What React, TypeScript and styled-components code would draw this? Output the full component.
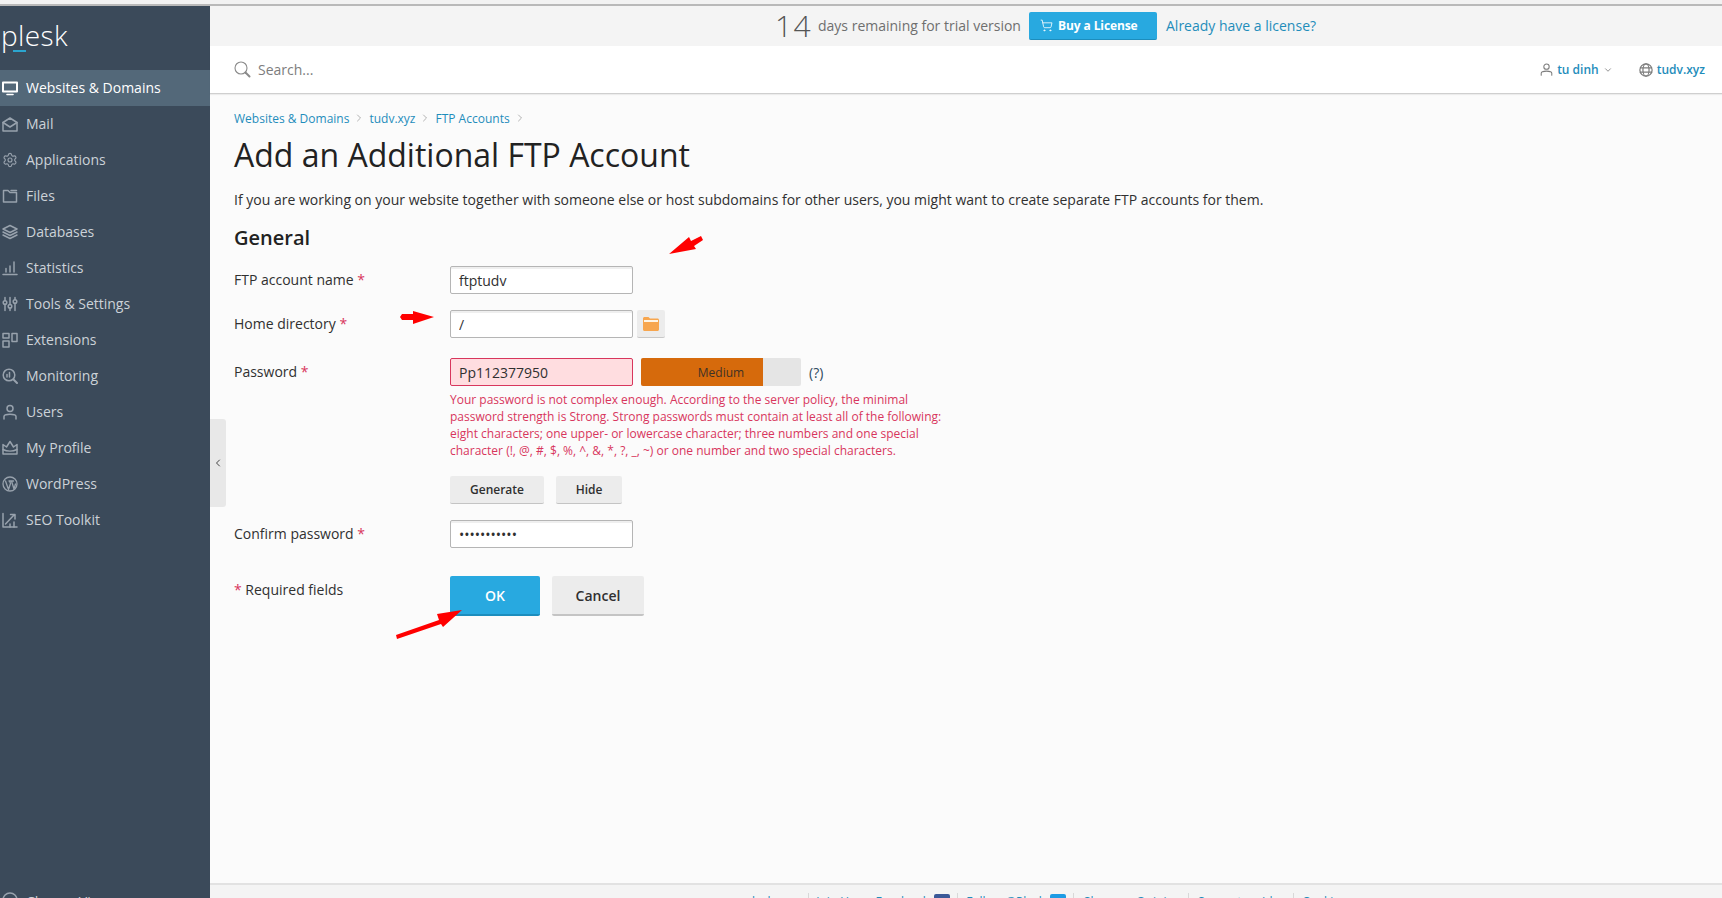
import React from 'react';
import styled, { createGlobalStyle } from 'styled-components';
import { ChevronDown, ChevronLeft, ChevronRight, Settings, ShoppingCart } from 'lucide-react';

const GlobalStyle = createGlobalStyle`
  html, body {
    margin: 0;
    padding: 0;
    height: 100%;
    overflow: hidden;
  }
  body {
    font-family: 'Open Sans', 'Liberation Sans', sans-serif;
    font-size: 14px;
    color: #303030;
  }
  * {
    box-sizing: border-box;
  }
`;

const Page = styled.div`
  position: relative;
  height: 100vh;
  overflow: hidden;
  background: #f2f2f2;
  padding-top: 4px;
`;

const TopLine = styled.div`
  height: 2px;
  background: #b9b9b9;
`;

const Shell = styled.div`
  display: flex;
  height: 892px;
`;

const Sidebar = styled.aside`
  flex: 0 0 210px;
  background: #3b4a5a;
  overflow: hidden;
`;

const Logo = styled.div`
  position: relative;
  height: 64px;
  padding: 11px 0 0 1px;
  font-size: 28px;
  font-weight: 300;
  line-height: 36px;
  letter-spacing: 0.4px;
  color: #ffffff;
`;

const LogoMark = styled.span`
  position: absolute;
  left: 13px;
  top: 44px;
  width: 13px;
  height: 2px;
  background: #2ba5cf;
`;

const NavItem = styled.div<{ $active?: boolean }>`
  display: flex;
  align-items: center;
  height: 36px;
  padding: 0 0 1px 2px;
  gap: 8px;
  font-size: 14px;
  font-weight: 500;
  background: ${(p) => (p.$active ? '#536879' : 'transparent')};
  color: ${(p) => (p.$active ? '#ffffff' : '#ccd2d8')};

  svg {
    flex: 0 0 16px;
    color: ${(p) => (p.$active ? '#ffffff' : '#98a2ad')};
  }
`;

const BottomItem = styled(NavItem)`
  margin-top: 354px;
  height: 26px;
  align-items: flex-start;
  padding-bottom: 0;
`;

const Main = styled.main`
  flex: 1;
  min-width: 0;
  display: flex;
  flex-direction: column;
  background: #fbfbfb;
`;

const TrialBar = styled.div`
  flex: 0 0 40px;
  display: flex;
  align-items: center;
  padding: 0 0 1px 565px;
  background: #f4f4f4;
  color: #6f6f6f;
`;

const TrialDays = styled.span`
  font-size: 30px;
  font-weight: 300;
  letter-spacing: 1.5px;
  line-height: 38px;
  width: 43px;
  color: #555555;
`;

const TrialText = styled.span`
  font-size: 14px;
  width: 211px;
`;

const BuyButton = styled.span`
  display: flex;
  align-items: center;
  gap: 5px;
  width: 128px;
  height: 28px;
  padding-left: 11px;
  border-radius: 2px;
  border-bottom: 1px solid #1c8dbd;
  background: #28a9e0;
  color: #ffffff;
  font-size: 12px;
  font-weight: 700;
  letter-spacing: -0.1px;
`;

const TextLink = styled.a<{ $size?: number; $weight?: number }>`
  color: #1f8dbb;
  font-size: ${(p) => p.$size ?? 14}px;
  font-weight: ${(p) => p.$weight ?? 400};
  text-decoration: none;
`;

const AlreadyLink = styled(TextLink)`
  margin-left: 9px;
`;

const SearchBar = styled.div`
  flex: 0 0 48px;
  display: flex;
  align-items: center;
  justify-content: space-between;
  padding: 0 17px 0 24px;
  background: #ffffff;
  border-bottom: 1px solid #cfcfcf;
  box-shadow: 0 1px 1px rgba(0, 0, 0, 0.06);
`;

const SearchBox = styled.div`
  display: flex;
  align-items: center;
  gap: 7px;
  color: #7d7d7d;
  font-size: 14px;
`;

const UserMenu = styled.div`
  display: flex;
  align-items: center;
  color: #7d7d7d;
`;

const UserEntry = styled.div<{ $gap: number }>`
  display: flex;
  align-items: center;
  gap: 4px;
  margin-right: ${(p) => p.$gap}px;
`;

const Content = styled.section`
  flex: 1;
  padding: 15px 24px 0;
`;

const Breadcrumbs = styled.nav`
  display: flex;
  align-items: center;
  height: 18px;
  gap: 4px;
  color: #8a8a8a;
`;

const Title = styled.h1`
  margin: 8px 0 0;
  font-size: 32px;
  font-weight: 400;
  line-height: 40px;
  color: #222222;
`;

const Intro = styled.p`
  margin: 15px 0 0;
  line-height: 20px;
  font-size: 14px;
  color: #303030;
`;

const SectionTitle = styled.h2`
  margin: 14px 0 0;
  font-size: 20px;
  font-weight: 600;
  line-height: 28px;
  color: #222222;
`;

const Row = styled.div<{ $top: number }>`
  display: grid;
  grid-template-columns: 216px 1fr;
  margin-top: ${(p) => p.$top}px;
`;

const Label = styled.label<{ $offset?: number }>`
  display: block;
  font-size: 14px;
  line-height: 20px;
  padding-top: ${(p) => p.$offset ?? 4}px;
  color: #303030;
`;

const Star = styled.span`
  color: #d8365d;
`;

const Field = styled.div`
  display: flex;
  align-items: center;
`;

const TextInput = styled.input<{ $error?: boolean }>`
  width: 183px;
  height: 28px;
  padding: 0 8px;
  border-radius: 2px;
  border: 1px solid ${(p) => (p.$error ? '#d8365d' : '#b5b5b5')};
  box-shadow: ${(p) => (p.$error ? 'none' : 'inset 0 2px 0 #efefef')};
  background: ${(p) => (p.$error ? '#ffdde0' : '#ffffff')};
  color: #303030;
  font: 14px 'Open Sans', 'Liberation Sans', sans-serif;
  outline: none;
`;

const BrowseButton = styled.span`
  display: flex;
  align-items: center;
  justify-content: center;
  width: 28px;
  height: 28px;
  margin-left: 4px;
  background: #ececec;
  border-bottom: 1px solid #c8c8c8;
  border-radius: 2px;
`;

const Strength = styled.div`
  position: relative;
  width: 160px;
  height: 28px;
  margin-left: 8px;
  background: #e5e5e5;
  border-radius: 2px;
  overflow: hidden;
`;

const StrengthFill = styled.div<{ $percent: number }>`
  width: ${(p) => p.$percent}%;
  height: 100%;
  background: #d66a0c;
`;

const StrengthLabel = styled.span`
  position: absolute;
  inset: 0;
  display: flex;
  align-items: center;
  justify-content: center;
  font-size: 12px;
  color: #3f3226;
`;

const Hint = styled.span`
  margin-left: 8px;
  color: #2f4a5f;
  font-size: 14px;
`;

const ErrorText = styled.div`
  width: 505px;
  margin-top: 5px;
  font-size: 12px;
  line-height: 17px;
  color: #d8365d;
`;

const ButtonRow = styled.div<{ $top: number; $gap: number }>`
  display: flex;
  gap: ${(p) => p.$gap}px;
  margin-top: ${(p) => p.$top}px;
`;

const SmallButton = styled.span<{ $width: number }>`
  display: flex;
  align-items: center;
  justify-content: center;
  width: ${(p) => p.$width}px;
  height: 28px;
  background: #ececec;
  border-bottom: 1px solid #c4c4c4;
  border-radius: 2px;
  font-size: 12px;
  font-weight: 600;
  color: #303030;
`;

const BigButton = styled.span<{ $primary?: boolean; $width: number }>`
  display: flex;
  align-items: center;
  justify-content: center;
  width: ${(p) => p.$width}px;
  height: 40px;
  border-radius: 2px;
  background: ${(p) => (p.$primary ? '#28a9e0' : '#ececec')};
  border-bottom: 2px solid ${(p) => (p.$primary ? '#1c8dbd' : '#c4c4c4')};
  color: ${(p) => (p.$primary ? '#ffffff' : '#303030')};
  font-size: 14px;
  font-weight: 600;
`;

const Footer = styled.footer`
  flex: 0 0 15px;
  display: flex;
  align-items: flex-start;
  padding: 8px 0 0 538px;
  overflow: hidden;
  background: #f4f4f4;
  border-top: 2px solid #e2e2e2;
`;

const FooterItem = styled.div<{ $width: number }>`
  display: flex;
  align-items: flex-start;
  justify-content: flex-end;
  gap: 5px;
  width: ${(p) => p.$width}px;
  height: 20px;
  padding-right: 7px;
  border-right: 1px solid #d8d8d8;
  white-space: nowrap;
`;

const FooterLast = styled(TextLink)`
  margin-left: 8px;
`;

const SocialBadge = styled.span<{ $color: string }>`
  display: block;
  width: 16px;
  height: 16px;
  margin-top: 1px;
  border-radius: 2px;
  background: ${(p) => p.$color};
`;

const Arrow = styled.svg`
  position: absolute;
  left: 0;
  top: 0;
  pointer-events: none;
`;

const CollapseTab = styled.div`
  position: absolute;
  left: 210px;
  top: 419px;
  width: 16px;
  height: 88px;
  display: flex;
  align-items: center;
  justify-content: center;
  background: #e8e8e8;
  border-radius: 0 3px 3px 0;
  color: #444444;
`;

const Ico = ({ children, size = 16, weight = 1.5 }: { children: React.ReactNode; size?: number; weight?: number }) => (
  <svg
    width={size}
    height={size}
    viewBox="0 0 16 16"
    fill="none"
    stroke="currentColor"
    strokeWidth={weight}
    strokeLinecap="round"
    strokeLinejoin="round"
  >
    {children}
  </svg>
);

const navItems: { label: string; icon: React.ReactNode; active?: boolean }[] = [
  {
    label: 'Websites & Domains',
    active: true,
    icon: (
      <Ico>
        <rect x="1" y="2.5" width="14" height="9" strokeWidth="2" />
        <path d="M5 14.5h6" strokeWidth="1.6" />
      </Ico>
    ),
  },
  {
    label: 'Mail',
    icon: (
      <Ico>
        <path d="M1 6.5 8 2l7 4.5V15H1z" />
        <path d="M1 6.5 8 11l7-4.500" />
      </Ico>
    ),
  },
  {
    label: 'Applications',
    icon: <Settings size={16} strokeWidth={1.7} />,
  },
  {
    label: 'Files',
    icon: (
      <Ico>
        <path d="M1.500 2.500h4.500l2 2h6.500V14h-13z" />
        <path d="M9 2.500h5.500" />
      </Ico>
    ),
  },
  {
    label: 'Databases',
    icon: (
      <Ico>
        <path d="M8 1.500 15 5 8 8.500 1 5z" />
        <path d="M1 8l7 3.500L15 8" />
        <path d="M1 11l7 3.500 7-3.500" />
      </Ico>
    ),
  },
  {
    label: 'Statistics',
    icon: (
      <Ico>
        <path d="M1 14.500h14" />
        <path d="M4 12V8.500M8 12V6M12 12V2" />
      </Ico>
    ),
  },
  {
    label: 'Tools & Settings',
    icon: (
      <Ico>
        <path d="M3 1.500v3M3 8.500v6M8 1.500v7M8 12v2.500M13 1.500v2M13 7.500v7" />
        <circle cx="3" cy="6.500" r="1.800" />
        <circle cx="8" cy="10.200" r="1.800" />
        <circle cx="13" cy="5.500" r="1.800" />
      </Ico>
    ),
  },
  {
    label: 'Extensions',
    icon: (
      <Ico>
        <rect x="1" y="1.500" width="6" height="4.500" />
        <rect x="1" y="9" width="6" height="6" />
        <rect x="10" y="1.500" width="5" height="8" />
      </Ico>
    ),
  },
  {
    label: 'Monitoring',
    icon: (
      <Ico>
        <circle cx="7" cy="7" r="5.800" />
        <path d="M11.500 11.500 15 15" strokeWidth="2" />
        <path d="M5 9V6.500M7.500 9V4.500" />
      </Ico>
    ),
  },
  {
    label: 'Users',
    icon: (
      <Ico>
        <circle cx="8" cy="4.500" r="3" />
        <path d="M2 15v-2.500c0-1.500 2-2.300 6-2.300s6 .8 6 2.300V15" />
      </Ico>
    ),
  },
  {
    label: 'My Profile',
    icon: (
      <Ico>
        <path d="M1 4.500 4.500 7 8 1.500 11.500 7 15 4.500V14H1z" />
        <path d="M1 9.500c4 2 10 2 14 0" />
      </Ico>
    ),
  },
  {
    label: 'WordPress',
    icon: (
      <Ico weight={1.300}>
        <circle cx="8" cy="8" r="7" />
        <path d="M3.500 5 6.500 13.500 8.500 7.500 7.500 5M7 5h4.500M9.500 5l2.500 8 1.500-5" />
      </Ico>
    ),
  },
  {
    label: 'SEO Toolkit',
    icon: (
      <Ico>
        <path d="M1 1.500V15h14" />
        <path d="M3.500 12 12 3M8.500 2.500H13V7" />
        <path d="M8 15v-3M12 15v-5" />
      </Ico>
    ),
  },
];

const SearchIcon = () => (
  <svg width="17" height="17" viewBox="0 0 17 17" fill="none" stroke="#8a8a8a" strokeLinecap="round">
    <circle cx="7" cy="7" r="6" strokeWidth="1.100" />
    <path d="M11.500 11.500 15.500 15.500" strokeWidth="2" />
  </svg>
);

const UserIcon = () => (
  <Ico size={13} weight={1.300}>
    <circle cx="8" cy="4.500" r="3.300" />
    <path d="M1.500 15v-2.500c0-1.500 2.500-2.500 6.500-2.500s6.500 1 6.500 2.500V15" />
  </Ico>
);

const GlobeIcon = () => (
  <Ico size={14} weight={1.400}>
    <circle cx="8" cy="8" r="7" />
    <ellipse cx="8" cy="8" rx="3.500" ry="7" />
    <path d="M1.500 5.500h13M1.500 10.500h13" />
  </Ico>
);

const FolderIcon = () => (
  <svg width="16" height="14" viewBox="0 0 16 14">
    <path d="M0 1.500C0 .7.700 0 1.500 0h4L7 1.500h7.500c.8 0 1.500.7 1.500 1.500v9.500c0 .8-.7 1.500-1.500 1.500h-13C.7 14 0 13.300 0 12.500z" fill="#f7a64f" />
    <rect x="1" y="3" width="14" height="2" fill="#fff5e6" />
  </svg>
);

const Crumb = ({ children }: { children: React.ReactNode }) => (
  <>
    <TextLink $size={12}>{children}</TextLink>
    <ChevronRight size={12} strokeWidth={1.300} />
  </>
);

const App = () => {
  return (
    <Page>
      <GlobalStyle />
      <TopLine />
      <Shell>
        <Sidebar>
          <Logo>
            plesk
            <LogoMark />
          </Logo>
          {navItems.map((item) => (
            <NavItem key={item.label} $active={item.active}>
              {item.icon}
              {item.label}
            </NavItem>
          ))}
          <BottomItem>
            <Ico>
              <circle cx="8" cy="8" r="7" />
            </Ico>
            Change View
          </BottomItem>
        </Sidebar>
        <Main>
          <TrialBar>
            <TrialDays>14</TrialDays>
            <TrialText>days remaining for trial version</TrialText>
            <BuyButton>
              <ShoppingCart size={13} strokeWidth={1.500} />
              Buy a License
            </BuyButton>
            <AlreadyLink>Already have a license?</AlreadyLink>
          </TrialBar>
          <SearchBar>
            <SearchBox>
              <SearchIcon />
              Search...
            </SearchBox>
            <UserMenu>
              <UserEntry $gap={26}>
                <UserIcon />
                <TextLink $size={12} $weight={600}>tu dinh</TextLink>
                <ChevronDown size={10} />
              </UserEntry>
              <UserEntry $gap={0}>
                <GlobeIcon />
                <TextLink $size={12} $weight={600}>tudv.xyz</TextLink>
              </UserEntry>
            </UserMenu>
          </SearchBar>
          <Content>
            <Breadcrumbs>
              <Crumb>Websites &amp; Domains</Crumb>
              <Crumb>tudv.xyz</Crumb>
              <Crumb>FTP Accounts</Crumb>
            </Breadcrumbs>
            <Title>Add an Additional FTP Account</Title>
            <Intro>
              If you are working on your website together with someone else or host subdomains for other users, you might want to create separate FTP accounts for them.
            </Intro>
            <SectionTitle>General</SectionTitle>
            <Row $top={14}>
              <Label>
                FTP account name <Star>*</Star>
              </Label>
              <Field>
                <TextInput readOnly defaultValue="ftptudv" />
              </Field>
            </Row>
            <Row $top={16}>
              <Label>
                Home directory <Star>*</Star>
              </Label>
              <Field>
                <TextInput readOnly defaultValue="/" />
                <BrowseButton>
                  <FolderIcon />
                </BrowseButton>
              </Field>
            </Row>
            <Row $top={20}>
              <Label>
                Password <Star>*</Star>
              </Label>
              <div>
                <Field>
                  <TextInput $error readOnly defaultValue="Pp112377950" />
                  <Strength>
                    <StrengthFill $percent={76} />
                    <StrengthLabel>Medium</StrengthLabel>
                  </Strength>
                  <Hint>(?)</Hint>
                </Field>
                <ErrorText>
                  Your password is not complex enough. According to the server policy, the minimal password strength is Strong. Strong passwords must contain at least all of the following: eight characters; one upper- or lowercase character; three numbers and one special character (!, @, #, $, %, ^, &amp;, *, ?, _, ~) or one number and two special characters.
                </ErrorText>
                <ButtonRow $top={17} $gap={12}>
                  <SmallButton $width={94}>Generate</SmallButton>
                  <SmallButton $width={66}>Hide</SmallButton>
                </ButtonRow>
              </div>
            </Row>
            <Row $top={16}>
              <Label>
                Confirm password <Star>*</Star>
              </Label>
              <Field>
                <TextInput readOnly type="password" defaultValue="Pp112377950" />
              </Field>
            </Row>
            <Row $top={28}>
              <Label>
                <Star>*</Star> Required fields
              </Label>
              <ButtonRow $top={0} $gap={12}>
                <BigButton $primary $width={90}>OK</BigButton>
                <BigButton $width={92}>Cancel</BigButton>
              </ButtonRow>
            </Row>
          </Content>
          <Footer>
            <FooterItem $width={61}>
              <TextLink $size={12}>plesk.com</TextLink>
            </FooterItem>
            <FooterItem $width={149}>
              <TextLink $size={12}>Join Us on Facebook</TextLink>
              <SocialBadge $color="#3b5998" />
            </FooterItem>
            <FooterItem $width={116}>
              <TextLink $size={12}>Follow @Plesk</TextLink>
              <SocialBadge $color="#1d9be4" />
            </FooterItem>
            <FooterItem $width={115}>
              <TextLink $size={12}>Share an Opinion</TextLink>
            </FooterItem>
            <FooterItem $width={105}>
              <TextLink $size={12}>Suggest an Idea</TextLink>
            </FooterItem>
            <FooterLast $size={12}>Cookies</FooterLast>
          </Footer>
        </Main>
      </Shell>
      <CollapseTab>
        <ChevronLeft size={12} />
      </CollapseTab>
      <Arrow width="1722" height="898" viewBox="0 0 1722 898">
        <path d="M669 254 689 237 691 241 701 236 703 240 694 246 696 249Z" fill="#ff0000" />
        <path d="M434 317 413 311 413 314 402 314 400 317 402 320 413 320 413 324Z" fill="#ff0000" />
        <path d="M462 610 437 614 439 620 396 635 397 639 441 624 443 627Z" fill="#ff0000" />
      </Arrow>
    </Page>
  );
};

export default App;
